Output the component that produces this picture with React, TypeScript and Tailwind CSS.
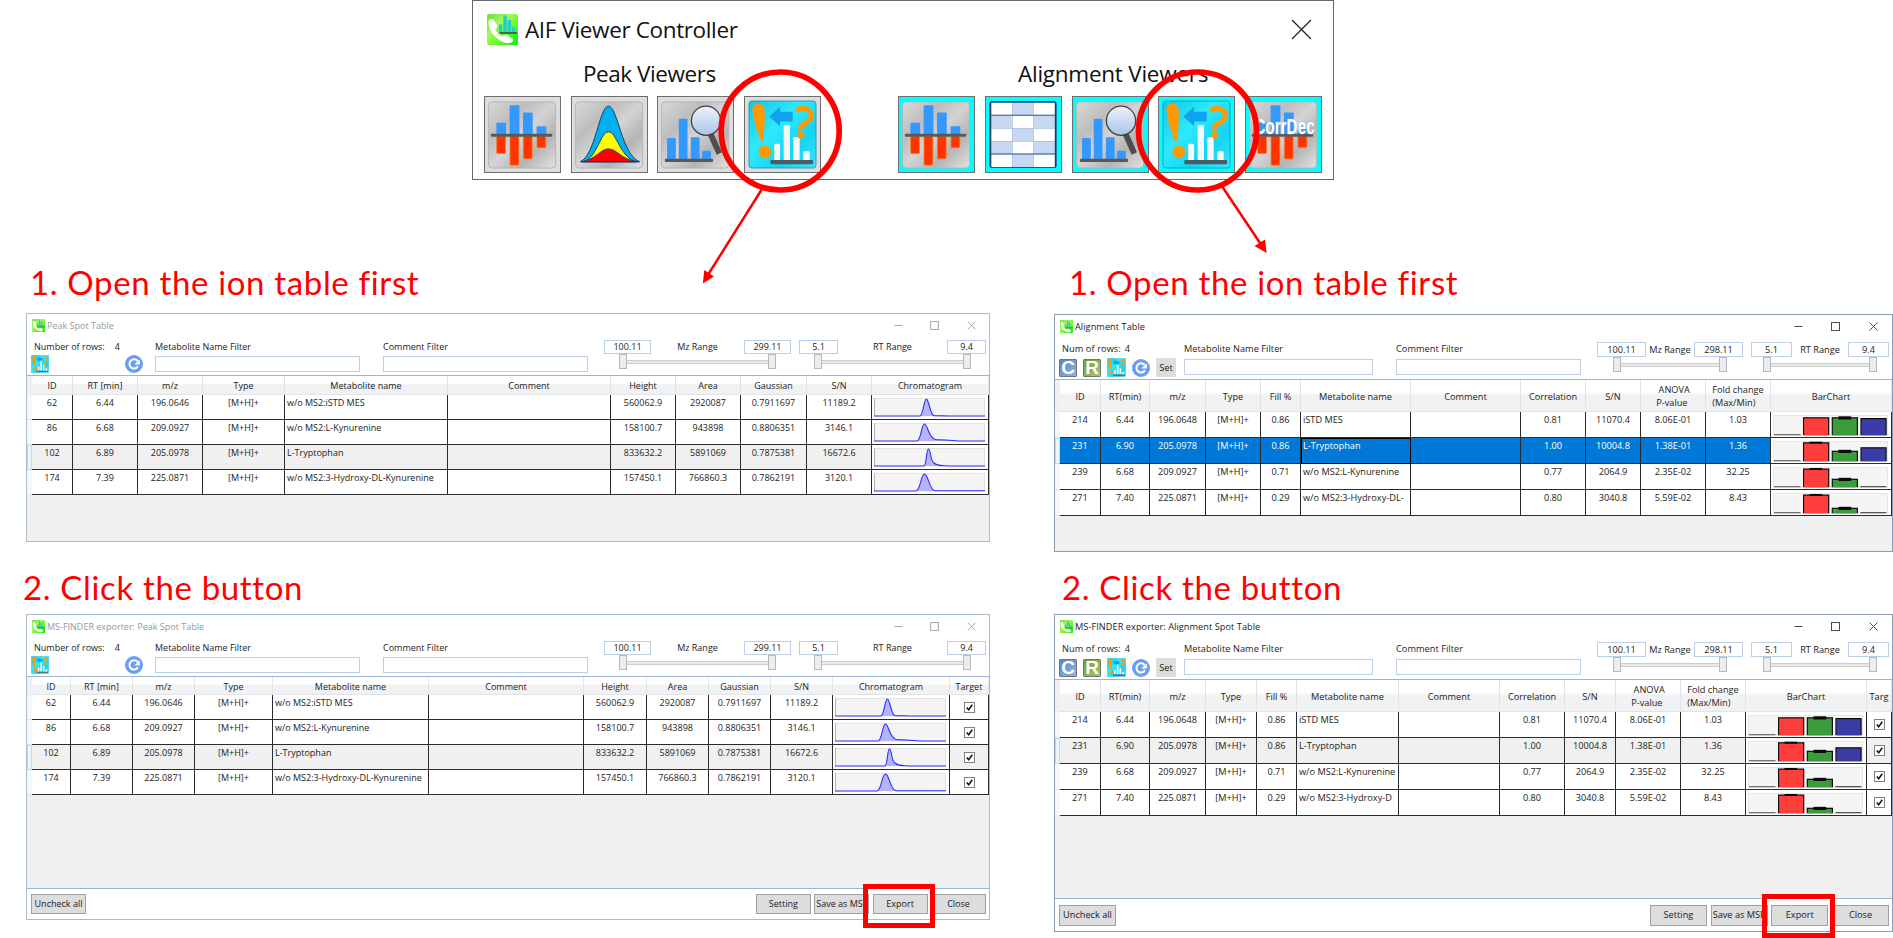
import React from "react";

type Kind = "peak" | "align";

/* ---------- icons ---------- */

function AppIcon({ className }: { className: string }) {
  return (
    <svg viewBox="0 0 31 31" className={className}>
      <defs>
        <linearGradient id="appg" x1="0" y1="0" x2="1" y2="1">
          <stop offset="0" stopColor="#5fe03c" />
          <stop offset="0.35" stopColor="#a8f760" />
          <stop offset="0.65" stopColor="#62fa28" />
          <stop offset="1" stopColor="#00f010" />
        </linearGradient>
      </defs>
      <rect width="31" height="31" rx="2" fill="url(#appg)" />
      <path d="M1.500 8 C2 4.500 5.500 4 7 6.500 L10 11 C10.500 13 9 15 8 15.500 C10 19 13 21.500 16 22.500 C18 20.500 19.500 20.500 21 21.500 L26 25.500 C27 28.500 22 30 17 28.500 C8 25 1.500 17 1.500 8Z" fill="#fff" />
      <g fill="#22cfc6">
        <rect x="11.800" y="10.500" width="3.400" height="8" />
        <rect x="16.300" y="1.500" width="3.400" height="17" />
        <rect x="20.600" y="6" width="3.400" height="12.500" />
        <rect x="25" y="13.500" width="3" height="5" />
      </g>
      <path d="M12.500 19h17.500" stroke="#3f5c4c" strokeWidth="1.800" />
    </svg>
  );
}

function Plate() {
  return (
    <>
      <defs>
        <linearGradient id="plate" x1="0" y1="0" x2="1" y2="1">
          <stop offset="0" stopColor="#d9d9d9" />
          <stop offset="0.3" stopColor="#bdbdbd" />
          <stop offset="0.5" stopColor="#d4d4d4" />
          <stop offset="0.72" stopColor="#b4b4b4" />
          <stop offset="1" stopColor="#e2e2e2" />
        </linearGradient>
      </defs>
      <rect x="3.500" y="5" width="69" height="68" rx="4" fill="url(#plate)" stroke="#b5b5b5" strokeWidth="1" />
    </>
  );
}

function MirrorBars() {
  return (
    <>
      <g fill="#3399ff">
        <rect x="11.700" y="26.500" width="10" height="12" rx="1" />
        <rect x="25.300" y="8.500" width="10" height="30" rx="1" />
        <rect x="39" y="16" width="10" height="22" rx="1" />
        <rect x="53" y="30" width="10" height="9" rx="1" />
      </g>
      <g fill="#ff3300" stroke="#ff7a1a" strokeWidth="0.800">
        <rect x="12" y="40" width="9" height="18" rx="1" />
        <rect x="25.700" y="40" width="9" height="30" rx="1" />
        <rect x="39.400" y="40" width="9" height="23.500" rx="1" />
        <rect x="53.400" y="40" width="9" height="12" rx="1" />
      </g>
      <rect x="6" y="37.700" width="63" height="3" rx="1" fill="#595959" />
    </>
  );
}

function MirrorIcon() {
  return (
    <svg viewBox="0 0 77 77" className="h-full w-full">
      <Plate />
      <MirrorBars />
    </svg>
  );
}

function PeaksIcon() {
  return (
    <svg viewBox="0 0 77 77" className="h-full w-full">
      <Plate />
      <g stroke="#1f3864" strokeWidth="1" strokeLinejoin="round">
        <path d="M8.500 66.500 C24 60 28 9.500 37.500 9.500 C47 9.500 51 60 69.500 66.500Z" fill="#00b0f0" />
        <path d="M12 66.500 C26 62 29 35.700 37.500 35.700 C46 35.700 49 62 66 66.500Z" fill="#ffff00" />
        <path d="M10 66.500 C25 64 29 53.300 37.500 53.300 C46 53.300 50 64 67 66.500Z" fill="#ff0000" />
      </g>
    </svg>
  );
}

function SearchBarsIcon() {
  return (
    <svg viewBox="0 0 77 77" className="h-full w-full">
      <Plate />
      <defs>
        <linearGradient id="lens" x1="0" y1="0" x2="0" y2="1">
          <stop offset="0" stopColor="#eef4fc" />
          <stop offset="1" stopColor="#a9c3e6" />
        </linearGradient>
      </defs>
      <g fill="#3399ff">
        <rect x="9.300" y="42" width="9" height="22" rx="1" />
        <rect x="21.300" y="22.300" width="9" height="42" rx="1" />
        <rect x="33.700" y="41.300" width="9" height="23" rx="1" />
        <rect x="45.300" y="55.300" width="9" height="9" rx="1" />
      </g>
      <rect x="7" y="63.300" width="49.500" height="3.400" rx="1" fill="#595959" />
      <path d="M54 38 L63 58" stroke="#4d4d4d" strokeWidth="6" />
      <circle cx="49.300" cy="24.300" r="15" fill="url(#lens)" stroke="#404040" strokeWidth="1.300" />
    </svg>
  );
}

function FinderIcon({ className }: { className: string }) {
  return (
    <svg viewBox="3 3 71 71" className={className}>
      <defs>
        <linearGradient id="cy" x1="0" y1="0" x2="1" y2="1">
          <stop offset="0" stopColor="#17c3ea" />
          <stop offset="0.4" stopColor="#2ee9fb" />
          <stop offset="0.7" stopColor="#14d4f4" />
          <stop offset="1" stopColor="#3ae6fa" />
        </linearGradient>
      </defs>
      <rect x="4" y="4" width="69" height="69" rx="3" fill="url(#cy)" stroke="#1590b4" strokeWidth="0.800" />
      <path d="M7.500 12 C7.500 5 19.500 5 20 12 C20.500 22 20 35 18.700 44 C18.500 46.500 16.500 46.500 16 44.500 C12 34 8 22 7.500 12Z" fill="#ff9900" />
      <circle cx="20.300" cy="56.500" r="6.500" fill="#ff9900" />
      <path d="M25 20 L36 10 V15 H49 V25 H36 V30Z" fill="#10a2ea" />
      <g fill="#f5f7f8">
        <rect x="30" y="48" width="6" height="17" rx="1" />
        <rect x="39.700" y="29" width="6.500" height="36" rx="1" />
        <rect x="49.700" y="41" width="6.500" height="24" rx="1" />
        <rect x="60" y="55.700" width="6.500" height="10" rx="1" />
      </g>
      <path d="M53 14.500 C57 10 68 10 68 20 C68 27 56 26 57 34" fill="none" stroke="#ff9900" strokeWidth="5" />
      <circle cx="57.300" cy="39.300" r="3.700" fill="#ff9900" />
      <rect x="26" y="64.800" width="44" height="4.300" rx="1" fill="#4f5b62" />
    </svg>
  );
}

const checker = [0, 1, 2, 3, 4].flatMap((r) => [0, 1, 2].map((c) => ({ r, c })));

function TableIcon() {
  return (
    <svg viewBox="0 0 77 77" className="h-full w-full">
      <rect x="3.500" y="4" width="69" height="69" rx="3" fill="#1f3864" />
      <rect x="5.500" y="5.500" width="65" height="65" fill="#3c69aa" />
      {checker.map(({ r, c }) => (
        <rect key={`${r}-${c}`} x={5.5 + c * 21.7} y={6 + r * 13.2} width="21.700" height="13.200" fill={(r + c) % 2 ? "#c7d8f0" : "#ffffff"} />
      ))}
      <path d="M5 18.700h66M5 58.500h66" stroke="#2b5792" strokeWidth="1" />
    </svg>
  );
}

function CorrDecIcon() {
  return (
    <svg viewBox="0 0 77 77" className="h-full w-full overflow-visible">
      <Plate />
      <MirrorBars />
      <text x="8.500" y="37.500" textLength="62" lengthAdjust="spacingAndGlyphs" fontFamily="Liberation Sans, sans-serif" fontWeight="700" fontSize="23" fill="#ffffff" stroke="#9aa6b4" strokeWidth="0.700" paintOrder="stroke">
        CorrDec
      </text>
    </svg>
  );
}

function RefreshIcon({ className }: { className: string }) {
  return (
    <svg viewBox="0 0 18 18" className={className}>
      <circle cx="9" cy="9" r="9" fill="#6a9df5" />
      <path d="M13 11.300 A4.600 4.600 0 1 1 12.600 6" fill="none" stroke="#fff" strokeWidth="2" />
      <path d="M9.300 9.400 H14.800 V4.200Z" fill="#fff" />
    </svg>
  );
}

function LetterIcon({ letter, tone }: { letter: string; tone: string }) {
  return (
    <span className={`flex h-[18px] w-[18px] items-center justify-center overflow-hidden rounded-[1px] border border-[#70757c] bg-linear-to-br font-['Liberation_Sans',sans-serif] text-[19px] leading-none font-bold text-white ${tone}`}>
      {letter}
    </span>
  );
}

function WindowControls({ kind }: { kind: Kind }) {
  const peak = kind === "peak";
  return (
    <svg viewBox="0 0 84 9" className={peak ? "mr-[13px] h-[9px] w-[82px] text-[#a3a3a3]" : "mr-[14px] h-[9px] w-[84px] text-[#4d4d4d]"}>
      <g fill="none" stroke="currentColor" strokeWidth="1">
        <path d="M0.500 4.500h8" />
        <rect x="37.500" y="0.500" width="8" height="8" />
        <path d="M75.500 0.500l8 8M83.500 0.500l-8 8" />
      </g>
    </svg>
  );
}

/* ---------- charts ---------- */

const peakPaths = [
  "M0 18 H46 C49 18 50 1 52.300 1 C55 1 56 17 60 17.600 L75 18 H111",
  "M0 18 H43 C47 17.500 47.500 1 50.300 1 C54 1 54 15.500 62 16.800 C75 16.500 80 18 88 18 H111",
  "M0 18 H50 C52.500 17 52.500 1 54.300 1 C57 1 56 13 60 15 C63 18 66 17.500 74 18 H111",
  "M0 18 H42 C46.500 17.500 47 1 50.300 1 C54.500 1 55 17 61 17.700 H111",
];

function Chromatogram({ index }: { index: number }) {
  return (
    <svg viewBox="0 0 111 19" className="mt-[3px] ml-[2px] h-[19px] w-[111px]">
      <rect width="111" height="19" fill="#f4f4f4" />
      <path d="M0 0.500H111M110.500 0V18" stroke="#e3e3e3" />
      <path d="M0.500 0V18" stroke="#b5b5b5" />
      <path d={`${peakPaths[index]}Z`} fill="#b4b4fa" />
      <path d={peakPaths[index]} fill="none" stroke="#2c2cff" strokeWidth="1.100" />
    </svg>
  );
}

const barTops: number[][] = [
  [2.5, 2.5, 3.3],
  [1.5, 10, 6.5],
  [1.8, 12, 20],
  [1.8, 15, 20],
];
const barFills = ["#ff3d3d", "#3c9c3c", "#3c3ca6"];

function BarChart({ index }: { index: number }) {
  return (
    <svg viewBox="0 0 115 21" className="mt-[3px] ml-[2px] h-[21px] w-[115px]">
      <rect x="0.500" y="0.500" width="114" height="20" fill="#f5f5f5" stroke="#e6e6e6" />
      <path d="M1 19.700h26.500" stroke="#555" />
      {barTops[index].map((top, i) =>
        top > 19 ? (
          <path key={i} d={`M${30 + i * 28.7} 19.700h26`} stroke="#333" />
        ) : (
          <g key={i}>
            <rect x={30 + i * 28.7} y={top - 0.3} width="26.300" height={20.5 - top} fill="#0c0c0c" />
            <rect x={31.1 + i * 28.7} y={top + 0.9} width="24" height={19.3 - top} fill={barFills[i]} />
          </g>
        ),
      )}
      <rect x="65.500" y={barTops[index][1] - 1.2} width="12.700" height="3.200" fill="#0c0c0c" />
      {index > 0 && <rect x="36.500" y={barTops[index][0] - 0.8} width="12.700" height="2" fill="#0c0c0c" />}
    </svg>
  );
}

function Check() {
  return (
    <svg viewBox="0 0 11 11" className="h-[11px] w-[11px]">
      <rect x="0.500" y="0.500" width="10" height="10" fill="#fff" stroke="#808080" />
      <path d="M2.700 5.500 L4.700 7.700 L8.300 2.800" fill="none" stroke="#111" strokeWidth="1.500" />
    </svg>
  );
}

/* ---------- window parts ---------- */

function Slider({ className }: { className: string }) {
  return (
    <div className={`flex h-[15px] items-center ${className}`}>
      <span className="h-[15px] w-[8px] shrink-0 border border-[#b8b8b8] bg-[#ededed]" />
      <span className="h-[4px] flex-1 border-y border-[#cfcfcf] bg-[#e9e9e9]" />
      <span className="h-[15px] w-[8px] shrink-0 border border-[#b8b8b8] bg-[#ededed]" />
    </div>
  );
}

interface RangeProps {
  label: string;
  from: string;
  to: string;
  className: string;
  boxClass: string;
  sliderClass: string;
}

function Range({ label, from, to, className, boxClass, sliderClass }: RangeProps) {
  return (
    <div className={`shrink-0 ${className}`}>
      <div className="flex items-center justify-between whitespace-nowrap">
        <span className={`flex items-center justify-center border border-[#bccfe8] ${boxClass}`}>{from}</span>
        <span>{label}</span>
        <span className={`flex items-center justify-center border border-[#bccfe8] ${boxClass}`}>{to}</span>
      </div>
      <Slider className={sliderClass} />
    </div>
  );
}

function Filter({ label, className, labelClass }: { label: string; className: string; labelClass: string }) {
  return (
    <div className={`shrink-0 ${className}`}>
      <div className={`flex items-center whitespace-nowrap ${labelClass}`}>{label}</div>
      <div className="h-[16px] border border-[#bccfe8] bg-white" />
    </div>
  );
}

function PeakToolbar() {
  return (
    <div className="flex h-[36px]">
      <div className="w-[128px] pl-[4px]">
        <div className="flex h-[16px] items-center gap-[10px] pl-[3px]">
          <span>Number of rows:</span>
          <span>4</span>
        </div>
        <div className="flex w-[112px] justify-between">
          <FinderIcon className="h-[18px] w-[18px]" />
          <RefreshIcon className="h-[18px] w-[18px]" />
        </div>
      </div>
      <Filter label="Metabolite Name Filter" className="w-[205px]" labelClass="h-[17px] pb-px" />
      <Filter label="Comment Filter" className="ml-[23px] w-[205px]" labelClass="h-[17px] pb-px" />
      <Range label="Mz Range" from="100.11" to="299.11" className="mt-[1px] ml-[16px] w-[187px]" boxClass="h-[14px] w-[47px]" sliderClass="mr-[15px] ml-[15px]" />
      <Range label="RT Range" from="5.1" to="9.4" className="mt-[1px] ml-[8px] w-[187px]" boxClass="h-[14px] w-[39px]" sliderClass="mr-[15px] ml-[15px]" />
    </div>
  );
}

function AlignToolbar() {
  return (
    <div className="flex h-[39px]">
      <div className="w-[129px] shrink-0 pl-[4px]">
        <div className="flex h-[18px] items-center gap-[4px] pl-[3px] whitespace-nowrap">
          <span className="tracking-[0.1px]">Num of rows:</span>
          <span>4</span>
        </div>
        <div className="flex items-center gap-[6px]">
          <LetterIcon letter="C" tone="from-[#5b86c4] to-[#8fb4e6]" />
          <LetterIcon letter="R" tone="from-[#7d9c34] to-[#a6c85a]" />
          <FinderIcon className="h-[19px] w-[19px]" />
          <RefreshIcon className="h-[18px] w-[18px]" />
          <span className="flex h-[19px] w-[20px] items-center justify-center bg-[#dddddd]">Set</span>
        </div>
      </div>
      <Filter label="Metabolite Name Filter" className="w-[189px]" labelClass="h-[19px] pb-px tracking-[0.05px]" />
      <Filter label="Comment Filter" className="ml-[23px] w-[185px]" labelClass="h-[19px] pb-px tracking-[0.05px]" />
      <Range label="Mz Range" from="100.11" to="298.11" className="mt-[2px] ml-[16px] w-[146px]" boxClass="h-[15px] w-[49px]" sliderClass="mr-[16px] ml-[16px]" />
      <Range label="RT Range" from="5.1" to="9.4" className="mt-[2px] ml-[8px] w-[138px]" boxClass="h-[15px] w-[41px]" sliderClass="mr-[12px] ml-[12px]" />
    </div>
  );
}

interface TableProps {
  kind: Kind;
  headers: string[];
  rows: string[][];
  cols: string;
  headClass: string;
  highlight: string;
  checks: boolean;
  selected?: boolean;
}

function DataTable({ kind, headers, rows, cols, headClass, highlight, checks, selected = false }: TableProps) {
  const nameCol = kind === "peak" ? 4 : 5;
  const rowH = kind === "peak" ? "h-[25px]" : "h-[26px]";
  const cell = "overflow-hidden border-r border-b border-[#2b2b2b] whitespace-nowrap";
  return (
    <div className="min-h-0 flex-1 border-t border-[#9db4cf] bg-[#f0f0f0]">
      <div className="flex">
        <span className="w-[5px] shrink-0" />
        <div className={`grid ${cols} ${headClass}`}>
          {headers.map((h) => (
            <div key={h} className="flex items-center justify-center overflow-hidden border-r border-b border-[#e2e3e6] bg-linear-to-b from-white from-40% to-[#f1f2f4] to-50% pt-px leading-[13px] whitespace-pre">
              {h}
            </div>
          ))}
        </div>
      </div>
      {rows.map((row, r) => {
        const current = kind === "peak" ? r === 2 : r === 1;
        return (
          <div key={row[0]} className="flex">
            <span className={`w-[5px] shrink-0 ${current ? "border border-[#b5dff0] bg-[#eaf6fb]" : "border-b border-[#e4e4e4] bg-[#f7f7f7]"}`} />
            <div className={`grid ${cols} ${rowH} ${current ? highlight : "bg-white"}`}>
              {row.map((v, c) => (
                <div key={c} className={`${cell} ${kind === "peak" ? "pt-px leading-[13px]" : "pt-px leading-[14px]"} ${c === nameCol ? (current && selected ? "outline -outline-offset-1 outline-black pl-[2px]" : "pl-[2px]") : "text-center"}`}>
                  {v}
                </div>
              ))}
              <div className="border-r border-b border-[#2b2b2b] bg-white">
                {kind === "peak" ? <Chromatogram index={r} /> : <BarChart index={r} />}
              </div>
              {checks && (
                <div className="flex items-center justify-center border-r border-b border-[#2b2b2b]">
                  <Check />
                </div>
              )}
            </div>
          </div>
        );
      })}
    </div>
  );
}

function WinButton({ children, className }: { children: React.ReactNode; className: string }) {
  return (
    <button className={`flex shrink-0 items-center overflow-hidden border border-[#a0a0a0] bg-[#dddddd] whitespace-nowrap ${className}`}>{children}</button>
  );
}

function AppWindow({ kind, title, className, children }: { kind: Kind; title: string; className: string; children: React.ReactNode }) {
  const peak = kind === "peak";
  return (
    <section className={`flex flex-col border bg-white text-[#222] ${peak ? "w-[964px] border-[#a9bccb] text-[9px]" : "w-[839px] border-[#8b9dae] text-[9.2px]"} ${className}`}>
      <header className="flex h-[25px] shrink-0 items-center justify-between pb-[2px]">
        <div className={`flex items-center gap-[2px] pl-[5px] whitespace-nowrap ${peak ? "text-[#999]" : "tracking-[0.05px]"}`}>
          <AppIcon className="h-[13px] w-[13px]" />
          <span>{title}</span>
        </div>
        <WindowControls kind={kind} />
      </header>
      {peak ? <PeakToolbar /> : <AlignToolbar />}
      {children}
    </section>
  );
}

/* ---------- data ---------- */

const peakHeaders = ["ID", "RT [min]", "m/z", "Type", "Metabolite name", "Comment", "Height", "Area", "Gaussian", "S/N", "Chromatogram"];
const peakRows = [
  ["62", "6.44", "196.0646", "[M+H]+", "w/o MS2:iSTD MES", "", "560062.9", "2920087", "0.7911697", "11189.2"],
  ["86", "6.68", "209.0927", "[M+H]+", "w/o MS2:L-Kynurenine", "", "158100.7", "943898", "0.8806351", "3146.1"],
  ["102", "6.89", "205.0978", "[M+H]+", "L-Tryptophan", "", "833632.2", "5891069", "0.7875381", "16672.6"],
  ["174", "7.39", "225.0871", "[M+H]+", "w/o MS2:3-Hydroxy-DL-Kynurenine", "", "157450.1", "766860.3", "0.7862191", "3120.1"],
];
const alignHeaders = ["ID", "RT(min)", "m/z", "Type", "Fill %", "Metabolite name", "Comment", "Correlation", "S/N", " ANOVA\nP-value", "Fold change\n(Max/Min)", "BarChart"];
const alignRows = (last: string) => [
  ["214", "6.44", "196.0648", "[M+H]+", "0.86", "iSTD MES", "", "0.81", "11070.4", "8.06E-01", "1.03"],
  ["231", "6.90", "205.0978", "[M+H]+", "0.86", "L-Tryptophan", "", "1.00", "10004.8", "1.38E-01", "1.36"],
  ["239", "6.68", "209.0927", "[M+H]+", "0.71", "w/o MS2:L-Kynurenine", "", "0.77", "2064.9", "2.35E-02", "32.25"],
  ["271", "7.40", "225.0871", "[M+H]+", "0.29", last, "", "0.80", "3040.8", "5.59E-02", "8.43"],
];

/* ---------- controller ---------- */

function ToolButton({ cyan = false, children }: { cyan?: boolean; children: React.ReactNode }) {
  return (
    <button className={`h-[77px] w-[77px] shrink-0 border border-[#6e6e6e] ${cyan ? "bg-[#00ffff]" : "bg-[#dddddd]"}`}>{children}</button>
  );
}

function Controller() {
  return (
    <section className="ml-[472px] flex h-[180px] w-[862px] flex-col border border-[#666] bg-white text-[22.5px] text-[#111]">
      <header className="flex h-[56px] items-center justify-between pr-[21px] pl-[14px]">
        <div className="flex items-center gap-[7px]">
          <AppIcon className="h-[31px] w-[31px]" />
          <span className="pt-[2px] tracking-[-0.37px]">AIF Viewer Controller</span>
        </div>
        <svg viewBox="0 0 21 21" className="h-[21px] w-[21px]">
          <path d="M1 1l19 19M20 1l-19 19" stroke="#222" strokeWidth="1.300" fill="none" />
        </svg>
      </header>
      <div className="flex pl-[11px]">
        <div className="w-[414px]">
          <div className="flex h-[39px] w-[337px] items-center pb-[5px] pl-[99px] tracking-[-0.45px]">Peak Viewers</div>
          <div className="flex gap-[9.600px]">
            <ToolButton><MirrorIcon /></ToolButton>
            <ToolButton><PeaksIcon /></ToolButton>
            <ToolButton><SearchBarsIcon /></ToolButton>
            <ToolButton><FinderIcon className="h-full w-full p-[3px]" /></ToolButton>
          </div>
        </div>
        <div>
          <div className="flex h-[39px] items-center pb-[5px] pl-[120px] tracking-[-0.25px]">Alignment Viewers</div>
          <div className="flex gap-[9.750px]">
            <ToolButton cyan><MirrorIcon /></ToolButton>
            <ToolButton cyan><TableIcon /></ToolButton>
            <ToolButton cyan><SearchBarsIcon /></ToolButton>
            <ToolButton cyan><FinderIcon className="h-full w-full p-[3px]" /></ToolButton>
            <ToolButton cyan><CorrDecIcon /></ToolButton>
          </div>
        </div>
      </div>
    </section>
  );
}

function Annotations() {
  return (
    <svg viewBox="0 0 1893 938" className="pointer-events-none absolute inset-0 h-[938px] w-[1893px]">
      <g fill="none" stroke="#ff0000">
        <circle cx="780.200" cy="131" r="59" strokeWidth="5.700" />
        <circle cx="1197.500" cy="131" r="59" strokeWidth="5.700" />
        <path d="M762 189 L708.500 274" strokeWidth="2.500" />
        <path d="M1222.500 187 L1261 244.500" strokeWidth="2.500" />
        <rect x="865.500" y="886.500" width="67" height="39" strokeWidth="5" />
        <rect x="1764.500" y="896.500" width="68" height="39" strokeWidth="5" />
      </g>
      <path d="M702.800 283.500 L704.300 270 L714 276.500Z" fill="#ff0000" />
      <path d="M1266.600 253 L1254.500 246 L1265 239.500Z" fill="#ff0000" />
    </svg>
  );
}

function StepHeading({ className, children }: { className: string; children: React.ReactNode }) {
  return (
    <h2 className={`font-['Lato',sans-serif] text-[33px] leading-[40px] tracking-[0.65px] whitespace-nowrap text-[#ff0000] ${className}`}>{children}</h2>
  );
}

const stepOne = "1. Open the ion table first";
const stepTwo = "2. Click the button";

export default function App() {
  return (
    <main className="relative h-[938px] w-[1893px] overflow-hidden bg-white font-['Open_Sans','Noto_Sans',sans-serif]">
      <Controller />
      <div className="flex">
        <div className="w-[1028px] pl-[26px]">
          <StepHeading className="h-[133px] pt-[82px] pl-[4px]">{stepOne}</StepHeading>
          <AppWindow kind="peak" title="Peak Spot Table" className="h-[229px]">
            <DataTable kind="peak" headers={peakHeaders} rows={peakRows} checks={false} highlight="bg-[#f0f0f0]" headClass="h-[19px]" cols="grid-cols-[41px_65px_65px_82px_163px_163px_65px_65px_66px_65px_117px]" />
          </AppWindow>
          <StepHeading className="-ml-[3px] h-[72px] pt-[25px]">{stepTwo}</StepHeading>
          <AppWindow kind="peak" title="MS-FINDER exporter: Peak Spot Table" className="h-[306px]">
            <DataTable kind="peak" headers={[...peakHeaders, "Target"]} rows={peakRows} checks highlight="bg-[#f0f0f0]" headClass="h-[18px]" cols="grid-cols-[39px_62px_62px_78px_156px_155px_63px_62px_62px_62px_117px_39px]" />
            <footer className="flex h-[31px] shrink-0 items-center border-t border-[#9db4cf] pr-[3px] pb-px pl-[4px]">
              <WinButton className="h-[20px] w-[55px] justify-center">Uncheck all</WinButton>
              <div className="ml-auto flex gap-[3.400px]">
                <WinButton className="h-[20px] w-[55px] justify-center">Setting</WinButton>
                <WinButton className="h-[20px] w-[55px] pl-[1px]">Save as MSP</WinButton>
                <WinButton className="h-[20px] w-[55px] justify-center">Export</WinButton>
                <WinButton className="h-[20px] w-[55px] justify-center">Close</WinButton>
              </div>
            </footer>
          </AppWindow>
        </div>
        <div className="w-[865px] pl-[26px]">
          <StepHeading className="h-[134px] pt-[82px] pl-[15px]">{stepOne}</StepHeading>
          <AppWindow kind="align" title="Alignment Table" className="h-[238px]">
            <DataTable kind="align" headers={alignHeaders} rows={alignRows("w/o MS2:3-Hydroxy-DL-")} checks={false} selected highlight="bg-[#0078d7] text-white" headClass="h-[32px]" cols="grid-cols-[41px_49px_56px_55px_40px_110px_110px_65px_55px_65px_65px_121px]" />
          </AppWindow>
          <StepHeading className="h-[62px] pt-[15px] pl-[8px]">{stepTwo}</StepHeading>
          <AppWindow kind="align" title="MS-FINDER exporter: Alignment Spot Table" className="h-[318px]">
            <DataTable kind="align" headers={[...alignHeaders, "Targ"]} rows={alignRows("w/o MS2:3-Hydroxy-D")} checks highlight="bg-[#f0f0f0]" headClass="h-[32px]" cols="grid-cols-[41px_49px_56px_51px_40px_102px_101px_65px_51px_65px_65px_121px_25px]" />
            <footer className="flex h-[33px] shrink-0 items-center border-t border-[#9db4cf] pr-[3px] pl-[4px]">
              <WinButton className="h-[21px] w-[57px] justify-center">Uncheck all</WinButton>
              <div className="ml-auto flex gap-[3.700px]">
                <WinButton className="h-[21px] w-[57px] justify-center">Setting</WinButton>
                <WinButton className="h-[21px] w-[57px] pl-[1px]">Save as MSP</WinButton>
                <WinButton className="h-[21px] w-[57px] justify-center">Export</WinButton>
                <WinButton className="h-[21px] w-[57px] justify-center">Close</WinButton>
              </div>
            </footer>
          </AppWindow>
        </div>
      </div>
      <Annotations />
    </main>
  );
}
